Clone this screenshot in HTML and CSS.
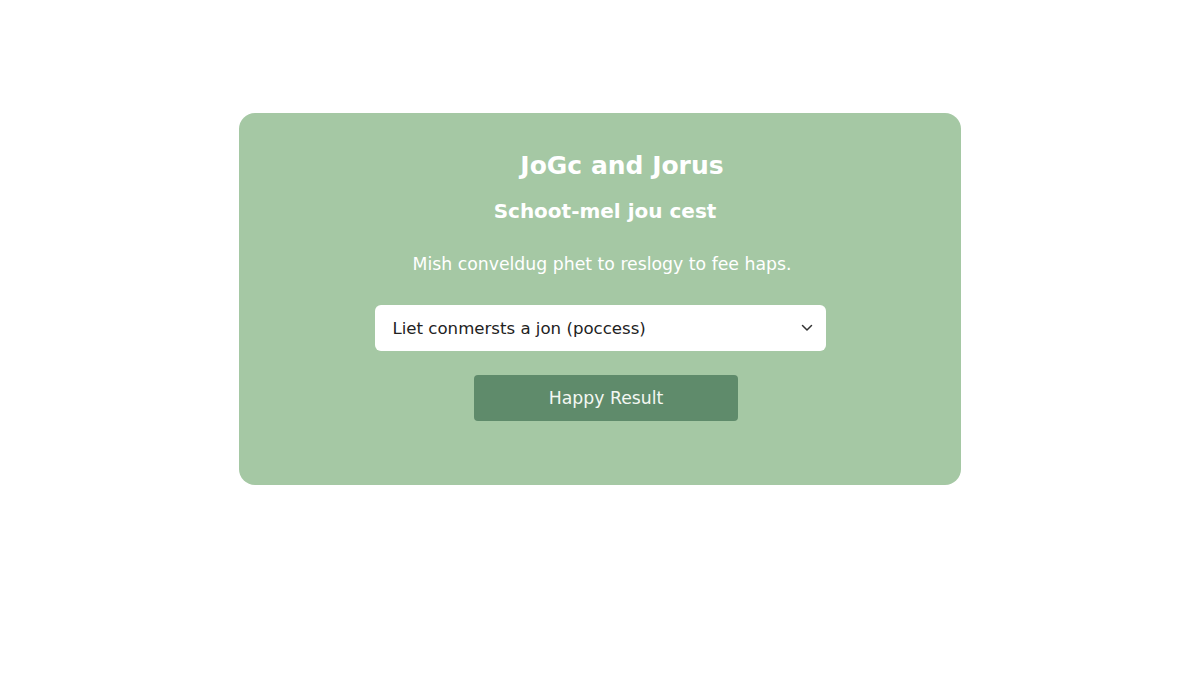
FILE: index.html
```html
<!DOCTYPE html>
<html>
<head>
<meta charset="utf-8">
<link rel="stylesheet" href="styles.css">
</head>
<body>
<main class="page">
  <section class="card">
    <h1 class="title">JoGc and Jorus</h1>
    <h2 class="subtitle">Schoot-mel jou cest</h2>
    <p class="desc">Mish conveldug phet to reslogy to fee haps.</p>
    <div class="select">
      <span class="select-text">Liet conmersts a jon (poccess)</span>
      <svg class="chev" width="12" height="8" viewBox="0 0 12 8"><path d="M1.5 1.5 L6 6 L10.5 1.5" fill="none" stroke="#333" stroke-width="1.5" stroke-linecap="round" stroke-linejoin="round"/></svg>
    </div>
    <button class="btn">Happy Result</button>
  </section>
</main>
</body>
</html>
```
FILE: styles.css
```css
html, body {
  margin: 0;
  padding: 0;
  background: #ffffff;
}
body {
  width: 1200px;
  height: 675px;
  font-family: "DejaVu Sans", "Open Sans", sans-serif;
}
.page {
  padding-top: 113px;
  display: flex;
  justify-content: center;
}
.card {
  width: 722px;
  height: 372px;
  box-sizing: border-box;
  background: #a5c8a4;
  border-radius: 16px;
  display: flex;
  flex-direction: column;
  align-items: center;
  padding-top: 35px;
}
.title {
  margin: 0 0 0 44px;
  font-size: 25px;
  font-weight: 600;
  color: #ffffff;
  line-height: 36px;
}
.subtitle {
  margin: 12px 0 0 10px;
  font-size: 20px;
  font-weight: 600;
  color: #ffffff;
  line-height: 30px;
}
.desc {
  margin: 25px 0 0 4px;
  font-size: 17.3px;
  font-weight: 400;
  color: #ffffff;
  line-height: 26px;
}
.select {
  margin-top: 28px;
  width: 451px;
  height: 46px;
  box-sizing: border-box;
  background: #ffffff;
  border-radius: 6px;
  display: flex;
  align-items: center;
  justify-content: space-between;
  padding: 0 13px 0 18px;
}
.select-text {
  font-size: 16.6px;
  color: #222222;
}
.btn {
  margin: 24px 0 0 12px;
  width: 264px;
  height: 46px;
  border: none;
  border-radius: 4px;
  background: #5f8b6b;
  color: #f3f7f2;
  font-family: "DejaVu Sans", "Open Sans", sans-serif;
  font-size: 17.3px;
}
```
